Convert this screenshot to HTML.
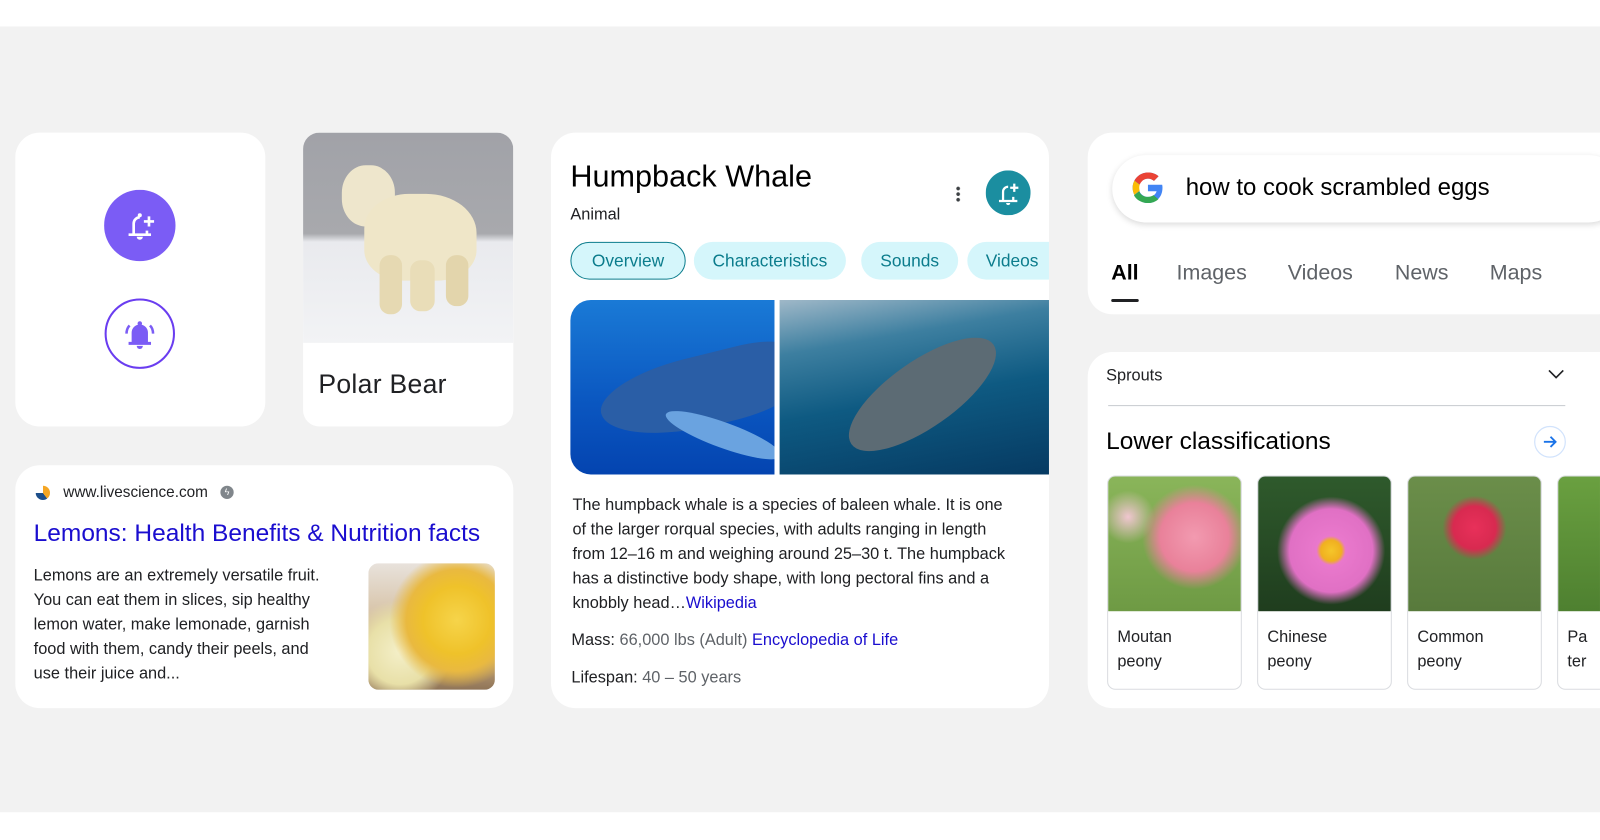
<!DOCTYPE html>
<html><head><meta charset="utf-8"><style>
*{margin:0;padding:0;box-sizing:border-box}
html,body{width:1600px;height:840px;overflow:hidden}
body{background:#fff;font-family:"Liberation Sans",sans-serif;position:relative;color:#202124}
#w{position:absolute;left:0;top:0;width:1568px;height:823px;transform:scale(1.0204);transform-origin:0 0}
.bg{position:absolute;left:0;top:26px;width:1600px;height:770px;background:#f2f2f2}
.card{position:absolute;background:#fff;border-radius:24px;overflow:hidden}
.a{position:absolute;white-space:nowrap}
.chip{position:absolute;top:237px;height:37px;border-radius:19px;background:#d5f6fb;color:#0b7c8c;font-size:17px;line-height:37px;text-align:center}
.tab{position:absolute;top:256px;font-size:21px;color:#5f6368}
.fl{position:absolute;top:121px;width:132px;height:210px;border:1px solid #dadce0;border-radius:8px;overflow:hidden;background:#fff}
.fl .im{height:132px}
.fl .t{position:absolute;left:9px;top:146px;font-size:16px;line-height:24px;color:#202124}
</style></head><body><div id="w">
<div class="bg"></div>

<div class="card" style="left:15px;top:130px;width:245px;height:288px">
 <svg class="a" style="left:87px;top:56px" width="70" height="70" viewBox="0 0 70 70"><circle cx="35" cy="35" r="35" fill="#7b5cf5"/>
 <g fill="none" stroke="#fff" stroke-width="2.6"><path d="M29 44V33a6 6 0 0 1 6-6M42 40v4"/><path d="M24 44h22"/><path d="M44 26v10M39 31h10"/></g><circle cx="35" cy="25" r="2" fill="#fff"/><path d="M32 46a3 3 0 0 0 6 0z" fill="#fff"/></svg>
 <svg class="a" style="left:87px;top:162px" width="70" height="70" viewBox="0 0 70 70"><circle cx="35" cy="35" r="33.5" fill="none" stroke="#6a3df0" stroke-width="2"/>
 <path d="M27 43V34a8 8 0 0 1 16 0v9h3v3H24v-3z" fill="#7b5cf5"/><circle cx="35" cy="25" r="2.2" fill="#7b5cf5"/><path d="M32 47a3 3 0 0 0 6 0z" fill="#7b5cf5"/><path d="M25 27q-3 3-3 8M45 27q3 3 3 8" stroke="#7b5cf5" stroke-width="2.5" fill="none"/></svg>
</div>

<div class="card" style="left:297px;top:130px;width:206px;height:288px;border-radius:16px">
 <div style="height:206px;background:linear-gradient(#a1a2a8 0,#a8a9ad 48%,#e9eaee 52%,#f2f3f5 100%);position:relative">
  <div style="position:absolute;left:38px;top:32px;width:52px;height:60px;border-radius:45%;background:#eee6cc"></div>
  <div style="position:absolute;left:60px;top:60px;width:110px;height:85px;border-radius:40% 45% 35% 35%;background:#efe6c8"></div>
  <div style="position:absolute;left:75px;top:120px;width:22px;height:58px;border-radius:10px;background:#e6d9b2"></div>
  <div style="position:absolute;left:105px;top:125px;width:24px;height:50px;border-radius:10px;background:#e9ddb8"></div>
  <div style="position:absolute;left:140px;top:120px;width:22px;height:50px;border-radius:10px;background:#e3d5ac"></div>
 </div>
 <div class="a" style="left:15px;top:231px;font-size:26px;color:#202124;letter-spacing:.3px">Polar Bear</div>
</div>

<div class="card" style="left:15px;top:456px;width:488px;height:238px">
 <div class="a" style="left:20px;top:20px;width:14px;height:14px;border-radius:50%;background:conic-gradient(#f5a623 0 40%,#1d4f8a 40% 75%,#fff 75%)"></div>
 <div class="a" style="left:47px;top:18px;font-size:15px;color:#202124">www.livescience.com</div>
 <div class="a" style="left:201px;top:20px;width:13px;height:13px;border-radius:50%;background:#80868b;color:#fff;font-size:9px;text-align:center;line-height:13px">ϟ</div>
 <div class="a" style="left:18px;top:53px;font-size:24px;color:#1a0dcf">Lemons: Health Benefits &amp; Nutrition facts</div>
 <div class="a" style="left:18px;top:97px;font-size:16px;line-height:24px;color:#202124;white-space:normal;width:298px">Lemons are an extremely versatile fruit. You can eat them in slices, sip healthy lemon water, make lemonade, garnish food with them, candy their peels, and use their juice and...</div>
 <div class="a" style="left:346px;top:96px;width:124px;height:124px;border-radius:10px;background:radial-gradient(circle at 70% 45%,#f6d44a 0,#efc22a 30%,#e9b940 45%,transparent 60%),radial-gradient(circle at 25% 70%,#f4efc8 0,#e8e0a8 25%,transparent 40%),linear-gradient(#e8e2dc,#c9a97a 75%,#8f7458)"></div>
</div>

<div class="card" style="left:540px;top:130px;width:488px;height:564px">
 <div class="a" style="left:19px;top:27px;font-size:30px;color:#000">Humpback Whale</div>
 <div class="a" style="left:19px;top:72px;font-size:16px;color:#202124">Animal</div>
 <div class="a" style="left:397px;top:52px;width:4px;height:16px;background:radial-gradient(circle,#3c4043 1.6px,transparent 2px) 0 0/4px 5.5px"></div>
 <svg class="a" style="left:426px;top:37px" width="44" height="44" viewBox="0 0 44 44"><circle cx="22" cy="22" r="22" fill="#1b8ea0"/><g fill="none" stroke="#fff" stroke-width="2.2"><path d="M17 30V21a5 5 0 0 1 5-5M27 26v4"/><path d="M13 30h18"/><path d="M28 13v8M24 17h8"/></g><path d="M20 32a2 2 0 0 0 4 0z" fill="#fff"/></svg>
</div>
<div class="chip" style="left:559px;width:113px;border:1.5px solid #0b7c8c;line-height:35px">Overview</div>
<div class="chip" style="left:680px;width:149px">Characteristics</div>
<div class="chip" style="left:844px;width:95px">Sounds</div>
<div class="chip" style="left:948px;width:80px;border-radius:19px 0 0 19px;text-align:left;padding-left:18px">Videos</div>
<div class="a" style="left:559px;top:294px;width:200px;height:171px;border-radius:20px 0 0 20px;overflow:hidden;background:linear-gradient(#1a7ad6,#0a56c0 60%,#0444b0)">
 <div style="position:absolute;left:28px;top:55px;width:200px;height:70px;border-radius:50% 30% 40% 60%;background:#2a5ea6;transform:rotate(-14deg)"></div>
 <div style="position:absolute;left:90px;top:120px;width:120px;height:25px;border-radius:50%;background:#6aa3e0;transform:rotate(20deg)"></div>
</div>
<div class="a" style="left:764px;top:294px;width:264px;height:171px;overflow:hidden;background:linear-gradient(170deg,#9fb8c8 0,#3d7fa0 25%,#0e5a82 55%,#063a62)">
 <div style="position:absolute;left:55px;top:60px;width:170px;height:65px;border-radius:50%;background:#5c6b74;transform:rotate(-35deg)"></div>
</div>
<div class="a" style="left:561px;top:484px;font-size:16px;line-height:24px;white-space:normal;width:430px;color:#202124">The humpback whale is a species of baleen whale. It is one of the larger rorqual species, with adults ranging in length from 12–16 m and weighing around 25–30 t. The humpback has a distinctive body shape, with long pectoral fins and a knobbly head…<span style="color:#1a0dcf">Wikipedia</span></div>
<div class="a" style="left:560px;top:619px;font-size:16px;color:#202124">Mass: <span style="color:#5f6368">66,000 lbs (Adult)</span> <span style="color:#1a0dcf">Encyclopedia of Life</span></div>
<div class="a" style="left:560px;top:656px;font-size:16px;color:#202124">Lifespan: <span style="color:#5f6368">40 – 50 years</span></div>

<div class="card" style="left:1066px;top:130px;width:502px;height:178px;border-radius:24px 0 0 24px">
 <div class="a" style="left:24px;top:22px;width:500px;height:66px;border-radius:33px;background:#fff;box-shadow:0 2px 6px rgba(0,0,0,.15)"></div>
 <svg class="a" style="left:41px;top:36px" width="36" height="36" viewBox="0 0 48 48"><path d="M43.6 20H24v8.5h11.3C34 33 29.6 36 24 36c-6.6 0-12-5.4-12-12s5.4-12 12-12c3 0 5.8 1.1 7.9 3l6-6C34.3 5.7 29.4 4 24 4 13 4 4 13 4 24s9 20 20 20c10 0 19-7 19-20 0-1.3-.1-2.7-.4-4z" fill="#4285f4"/><path d="M6.3 14.7l7 5.1C15.1 15.3 19.2 12 24 12c3 0 5.8 1.1 7.9 3l6-6C34.3 5.7 29.4 4 24 4 16.3 4 9.7 8.3 6.3 14.7z" fill="#ea4335"/><path d="M24 44c5.2 0 10-1.8 13.6-5l-6.3-5.3C29.3 35.2 26.8 36 24 36c-5.6 0-10-3-11.3-7.4l-7 5.4C9 40 16 44 24 44z" fill="#34a853"/><path d="M6.3 14.7C4.8 17.5 4 20.6 4 24s.8 6.5 2.2 9.3l7-5.4c-.4-1.2-.6-2.5-.6-3.9s.2-2.7.6-3.9z" fill="#fbbc05"/></svg>
 <div class="a" style="left:96px;top:40px;font-size:23.5px;color:#000">how to cook scrambled eggs</div>
</div>
<div class="tab" style="left:1089px;color:#000;font-weight:bold">All</div>
<div class="a" style="left:1089px;top:293px;width:27px;height:3px;background:#202124;border-radius:2px"></div>
<div class="tab" style="left:1153px">Images</div>
<div class="tab" style="left:1262px">Videos</div>
<div class="tab" style="left:1367px">News</div>
<div class="tab" style="left:1460px">Maps</div>

<div class="card" style="left:1066px;top:345px;width:502px;height:349px;border-radius:24px 0 0 24px">
 <div class="a" style="left:18px;top:15px;font-size:16px;color:#202124">Sprouts</div>
 <svg class="a" style="left:451px;top:17px" width="16" height="10" viewBox="0 0 16 10"><path d="M1 1l7 7 7-7" fill="none" stroke="#202124" stroke-width="1.6"/></svg>
 <div class="a" style="left:20px;top:52px;width:448px;height:1px;background:#c8cbd0"></div>
 <div class="a" style="left:18px;top:74px;font-size:24px;color:#000">Lower classifications</div>
 <svg class="a" style="left:437px;top:72px" width="32" height="32" viewBox="0 0 32 32"><circle cx="16" cy="16" r="15" fill="#fff" stroke="#d2e3fc" stroke-width="1.2"/><path d="M10 16h11M16.5 11l5 5-5 5" fill="none" stroke="#1a73e8" stroke-width="1.8"/></svg>
 <div class="fl" style="left:19px"><div class="im" style="background:radial-gradient(circle at 65% 45%,#f29ab0 0,#e9819a 30%,transparent 46%),radial-gradient(circle at 15% 30%,#f0c6d0 0,transparent 18%),linear-gradient(#8ab55a,#6e9a44)"></div><div class="t">Moutan<br>peony</div></div>
 <div class="fl" style="left:166px"><div class="im" style="background:radial-gradient(circle at 55% 55%,#f5c62a 0,#f0b020 10%,#e978cc 14%,#e070c4 40%,transparent 52%),linear-gradient(#2f5a2c,#1f3d1e)"></div><div class="t">Chinese<br>peony</div></div>
 <div class="fl" style="left:313px"><div class="im" style="background:radial-gradient(circle at 50% 38%,#e8305a 0,#d82a50 20%,transparent 30%),linear-gradient(#6b8e4a,#587a3c)"></div><div class="t">Common<br>peony</div></div>
 <div class="fl" style="left:460px"><div class="im" style="background:radial-gradient(circle at 60% 30%,#d81c1c 0,transparent 30%),linear-gradient(#6aa040,#4e8030)"></div><div class="t">Pa<br>ter</div></div>
</div>
</div></body></html>
